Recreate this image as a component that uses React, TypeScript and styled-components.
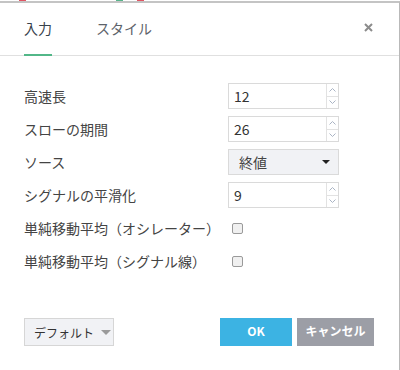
import React from "react";
import styled, { createGlobalStyle } from "styled-components";

const Global = createGlobalStyle`
  html, body { margin: 0; padding: 0; background: #fff; }
  body { font-family: "Noto Sans CJK JP", "Noto Sans", sans-serif; color: #333; }
  * { box-sizing: border-box; }
`;

const Strip = styled.div`
  position: relative;
  height: 1px;
  width: 400px;
  background: #fff;
`;

const Mark = styled.span<{ $c: string }>`
  position: absolute;
  top: 0;
  height: 1px;
  width: 7px;
  background: ${(p) => p.$c};
`;

const Dialog = styled.div`
  width: 400px;
  height: 369px;
  border-top: 2px solid #c4c4c4;
  border-right: 1px solid #b9b9b9;
  display: flex;
  flex-direction: column;
  background: #fff;
`;

const Header = styled.div`
  height: 53px;
  border-bottom: 1px solid #e0e0e0;
  display: flex;
  align-items: stretch;
  padding: 0 0 0 24px;
`;

const Tab = styled.div<{ $active?: boolean }>`
  position: relative;
  display: flex;
  align-items: center;
  margin-right: 44px;
  padding-bottom: 2px;
  font-size: 14px;
  color: ${(p) => (p.$active ? "#38424c" : "#5d636a")};
  &::after {
    content: "";
    display: ${(p) => (p.$active ? "block" : "none")};
    position: absolute;
    left: 0;
    right: 0;
    bottom: -1px;
    height: 2px;
    background: #52b788;
  }
`;

const Close = styled.div`
  margin-left: auto;
  width: 24px;
  margin-right: 19px;
  display: flex;
  align-items: center;
  justify-content: center;
  padding-bottom: 3px;
`;

const Body = styled.div`
  padding: 27px 0 0 24px;
  display: grid;
  grid-template-columns: 204px 111px;
  grid-auto-rows: 26px;
  row-gap: 7px;
  align-items: center;
`;

const Label = styled.div`
  font-size: 14px;
  color: #444;
  white-space: nowrap;
`;

const InputBox = styled.div`
  height: 26px;
  border: 1px solid #dadada;
  display: flex;
  background: #fff;
`;

const Value = styled.div`
  flex: 1;
  display: flex;
  align-items: center;
  padding-left: 5px;
  font-size: 14px;
  color: #333;
`;

const Spinner = styled.div`
  width: 12px;
  border-left: 1px solid #e2e2e2;
  display: flex;
  flex-direction: column;
`;

const SpinHalf = styled.div<{ $top?: boolean }>`
  flex: 1;
  display: flex;
  align-items: center;
  justify-content: center;
  border-bottom: ${(p) => (p.$top ? "1px solid #e2e2e2" : "none")};
`;

const Select = styled.div`
  height: 26px;
  border: 1px solid #dadada;
  background: #f1f2f5;
  display: flex;
  align-items: center;
  padding: 0 8px 0 10px;
  font-size: 14px;
  color: #444;
  justify-content: space-between;
`;

const Caret = styled.span<{ $c: string; $s: number }>`
  flex-shrink: 0;
  width: 0;
  height: 0;
  border-left: ${(p) => p.$s}px solid transparent;
  border-right: ${(p) => p.$s}px solid transparent;
  border-top: ${(p) => p.$s}px solid ${(p) => p.$c};
`;

const Check = styled.div`
  margin-left: 4px;
  width: 11px;
  height: 11px;
  border: 1px solid #9a9a9a;
  border-radius: 2px;
  background: #f0f0f0;
`;

const Footer = styled.div`
  margin-top: auto;
  padding: 0 25px 24px 24px;
  display: flex;
  align-items: center;
`;

const DefaultBtn = styled.div`
  flex-shrink: 0;
  width: 90px;
  height: 28px;
  border: 1px solid #d6d6d6;
  background: #f1f2f5;
  display: flex;
  align-items: center;
  padding-left: 9px;
  gap: 7px;
  font-size: 12px;
  color: #333;
  white-space: nowrap;
`;

const Btn = styled.div<{ $bg: string; $w: number }>`
  flex-shrink: 0;
  width: ${(p) => p.$w}px;
  height: 28px;
  background: ${(p) => p.$bg};
  color: #fff;
  font-weight: bold;
  font-size: 12px;
  white-space: nowrap;
  display: flex;
  align-items: center;
  justify-content: center;
  padding-bottom: 4px;
`;

const Spacer = styled.div`
  flex: 1;
`;

const Gap = styled.div`
  width: 5px;
`;

const Chev = ({ up }: { up?: boolean }) => (
  <svg width="7" height="4" viewBox="0 0 7 4">
    <path
      d={up ? "M0.5 3.5 L3.5 0.5 L6.5 3.5" : "M0.5 0.5 L3.5 3.5 L6.5 0.5"}
      fill="none"
      stroke="#aab4c4"
      strokeWidth="1"
    />
  </svg>
);

const NumInput = ({ v }: { v: string }) => (
  <InputBox>
    <Value>{v}</Value>
    <Spinner>
      <SpinHalf $top>
        <Chev up />
      </SpinHalf>
      <SpinHalf>
        <Chev />
      </SpinHalf>
    </Spinner>
  </InputBox>
);

export default function App() {
  return (
    <>
      <Global />
      <Strip>
        <Mark $c="#e05563" style={{ left: 19 }} />
        <Mark $c="#58b48b" style={{ left: 116 }} />
        <Mark $c="#e05563" style={{ left: 137 }} />
      </Strip>
      <Dialog>
        <Header>
          <Tab $active>入力</Tab>
          <Tab>スタイル</Tab>
          <Close>
            <svg width="9" height="9" viewBox="0 0 9 9">
              <path d="M1 1 L8 8 M8 1 L1 8" stroke="#8c8c8c" strokeWidth="2" />
            </svg>
          </Close>
        </Header>
        <Body>
          <Label>高速長</Label>
          <NumInput v="12" />
          <Label>スローの期間</Label>
          <NumInput v="26" />
          <Label>ソース</Label>
          <Select>
            終値
            <Caret $c="#222" $s={4} />
          </Select>
          <Label>シグナルの平滑化</Label>
          <NumInput v="9" />
          <Label>単純移動平均（オシレーター）</Label>
          <Check />
          <Label>単純移動平均（シグナル線）</Label>
          <Check />
        </Body>
        <Footer>
          <DefaultBtn>
            デフォルト
            <Caret $c="#9a9a9a" $s={5} />
          </DefaultBtn>
          <Spacer />
          <Btn $bg="#3cb3e3" $w={72}>OK</Btn>
          <Gap />
          <Btn $bg="#9c9ea6" $w={77}>
            キャンセル
          </Btn>
        </Footer>
      </Dialog>
    </>
  );
}
